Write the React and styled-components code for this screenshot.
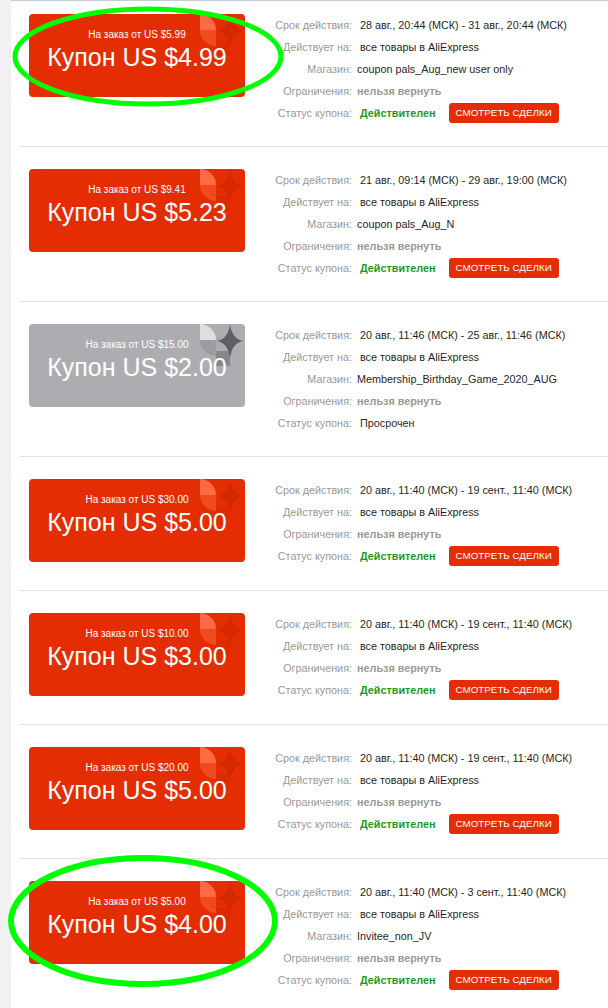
import React from "react";
import styled, { createGlobalStyle } from "styled-components";

const GlobalStyle = createGlobalStyle`
  html, body { margin: 0; padding: 0; background: #fff; }
  body { font-family: "Liberation Sans", Arial, sans-serif; }
`;

const Page = styled.div`
  position: relative;
  display: flex;
  width: 608px;
  height: 1008px;
  overflow: hidden;
  background: #fff;
`;

const Strip = styled.div`
  width: 11px;
  flex-shrink: 0;
  background: #f1f1f1;
`;

const Main = styled.div`
  flex: 1;
  border-top: 1px solid #c5ccd4;
  padding-left: 9px;
`;

const Row = styled.div`
  display: flex;
  align-items: flex-start;
  padding: 22px 0 ${(p) => (p.$short ? 23 : 22)}px 9px;
  border-bottom: 1px solid #e2e2e2;
  &:first-child { padding-top: 13px; }
`;

const Card = styled.div`
  position: relative;
  flex-shrink: 0;
  box-sizing: border-box;
  width: 216px;
  height: 83px;
  padding-top: 14px;
  border-radius: 4px;
  overflow: hidden;
  background: ${(p) => (p.$expired ? "#adadb1" : "#e52d03")};
  color: #fff;
  text-align: center;
`;

const Deco = styled.svg`
  position: absolute;
  top: 0;
  right: 0;
`;

const MinText = styled.div`
  position: relative;
  font-size: 10px;
  line-height: 14px;
`;

const Amount = styled.div`
  position: relative;
  font-size: 25px;
  line-height: 30px;
`;

const Info = styled.div`
  display: grid;
  grid-template-columns: 82px auto;
  column-gap: 5px;
  margin-left: 25px;
  font-size: 10.8px;
  line-height: 22px;
`;

const Label = styled.div`
  text-align: right;
  color: #999;
  white-space: nowrap;
`;

const Value = styled.div`
  display: flex;
  align-items: center;
  padding-left: ${(p) => p.$indent || 0}px;
  color: ${(p) => (p.$muted ? "#999" : "#1f1f1f")};
  font-weight: ${(p) => (p.$muted ? "bold" : "normal")};
  white-space: nowrap;
`;

const Status = styled.span`
  color: ${(p) => (p.$valid ? "#1c9a1c" : "#2a2a2a")};
  font-weight: ${(p) => (p.$valid ? "bold" : "normal")};
`;

const DealsButton = styled.button`
  margin-left: 13px;
  height: 20px;
  padding: 0 7px;
  border: none;
  border-radius: 3px;
  background: #e52d03;
  color: #fff;
  font-family: "Liberation Sans", Arial, sans-serif;
  font-size: 9.8px;
  line-height: 20px;
`;

const Overlay = styled.svg`
  position: absolute;
  top: 0;
  left: 0;
  pointer-events: none;
`;

const coupons = [
  { min: "5.99", amount: "4.99", period: "28 авг., 20:44 (МСК) - 31 авг., 20:44 (МСК)", store: "coupon pals_Aug_new user only", valid: true },
  { min: "9.41", amount: "5.23", period: "21 авг., 09:14 (МСК) - 29 авг., 19:00 (МСК)", store: "coupon pals_Aug_N", valid: true },
  { min: "15.00", amount: "2.00", period: "20 авг., 11:46 (МСК) - 25 авг., 11:46 (МСК)", store: "Membership_Birthday_Game_2020_AUG", valid: false },
  { min: "30.00", amount: "5.00", period: "20 авг., 11:40 (МСК) - 19 сент., 11:40 (МСК)", valid: true },
  { min: "10.00", amount: "3.00", period: "20 авг., 11:40 (МСК) - 19 сент., 11:40 (МСК)", valid: true },
  { min: "20.00", amount: "5.00", period: "20 авг., 11:40 (МСК) - 19 сент., 11:40 (МСК)", valid: true },
  { min: "5.00", amount: "4.00", period: "20 авг., 11:40 (МСК) - 3 сент., 11:40 (МСК)", store: "Invitee_non_JV", valid: true },
];

function Decoration({ expired }) {
  const c = expired
    ? { light: "#dedee0", mid: "#9c9ca0", dark: "#6f6f73", star: "#5f5f63" }
    : { light: "#ff6a45", mid: "#f04a1f", dark: "#d62a00", star: "#d42800" };
  return (
    <Deco width="46" height="46" viewBox="0 0 46 46">
      <path d="M1 0 A16 16 0 0 1 17 16 H1 Z" fill={c.light} />
      <path d="M1 16 H17 V32 A16 16 0 0 1 1 16 Z" fill={c.mid} />
      <rect x="17" y="27" width="14" height="15" fill={c.dark} opacity="0.6" />
      <path d="M31 0 Q33 15 44 17 Q33 19 31 34 Q29 19 18 17 Q29 15 31 0 Z" fill={c.star} />
    </Deco>
  );
}

function Coupon({ c }) {
  return (
    <Row $short={!c.store}>
      <Card $expired={!c.valid}>
        <Decoration expired={!c.valid} />
        <MinText>На заказ от US ${c.min}</MinText>
        <Amount>Купон US ${c.amount}</Amount>
      </Card>
      <Info>
        <Label>Срок действия:</Label>
        <Value $indent={3}>{c.period}</Value>
        <Label>Действует на:</Label>
        <Value $indent={3}>все товары в AliExpress</Value>
        {c.store && (
          <>
            <Label>Магазин:</Label>
            <Value>{c.store}</Value>
          </>
        )}
        <Label>Ограничения:</Label>
        <Value $muted>нельзя вернуть</Value>
        <Label>Статус купона:</Label>
        <Value $indent={3}>
          <Status $valid={c.valid}>{c.valid ? "Действителен" : "Просрочен"}</Status>
          {c.valid && <DealsButton>СМОТРЕТЬ СДЕЛКИ</DealsButton>}
        </Value>
      </Info>
    </Row>
  );
}

export default function App() {
  return (
    <>
      <GlobalStyle />
      <Page>
        <Strip />
        <Main>
          {coupons.map((c, i) => (
            <Coupon key={i} c={c} />
          ))}
        </Main>
        <Overlay width="608" height="1008" viewBox="0 0 608 1008">
          <ellipse cx="148" cy="56.5" rx="133" ry="47.5" fill="none" stroke="#00ff00" strokeWidth="5" />
          <ellipse cx="143" cy="921" rx="132" ry="63" fill="none" stroke="#00ff00" strokeWidth="6" />
        </Overlay>
      </Page>
    </>
  );
}
